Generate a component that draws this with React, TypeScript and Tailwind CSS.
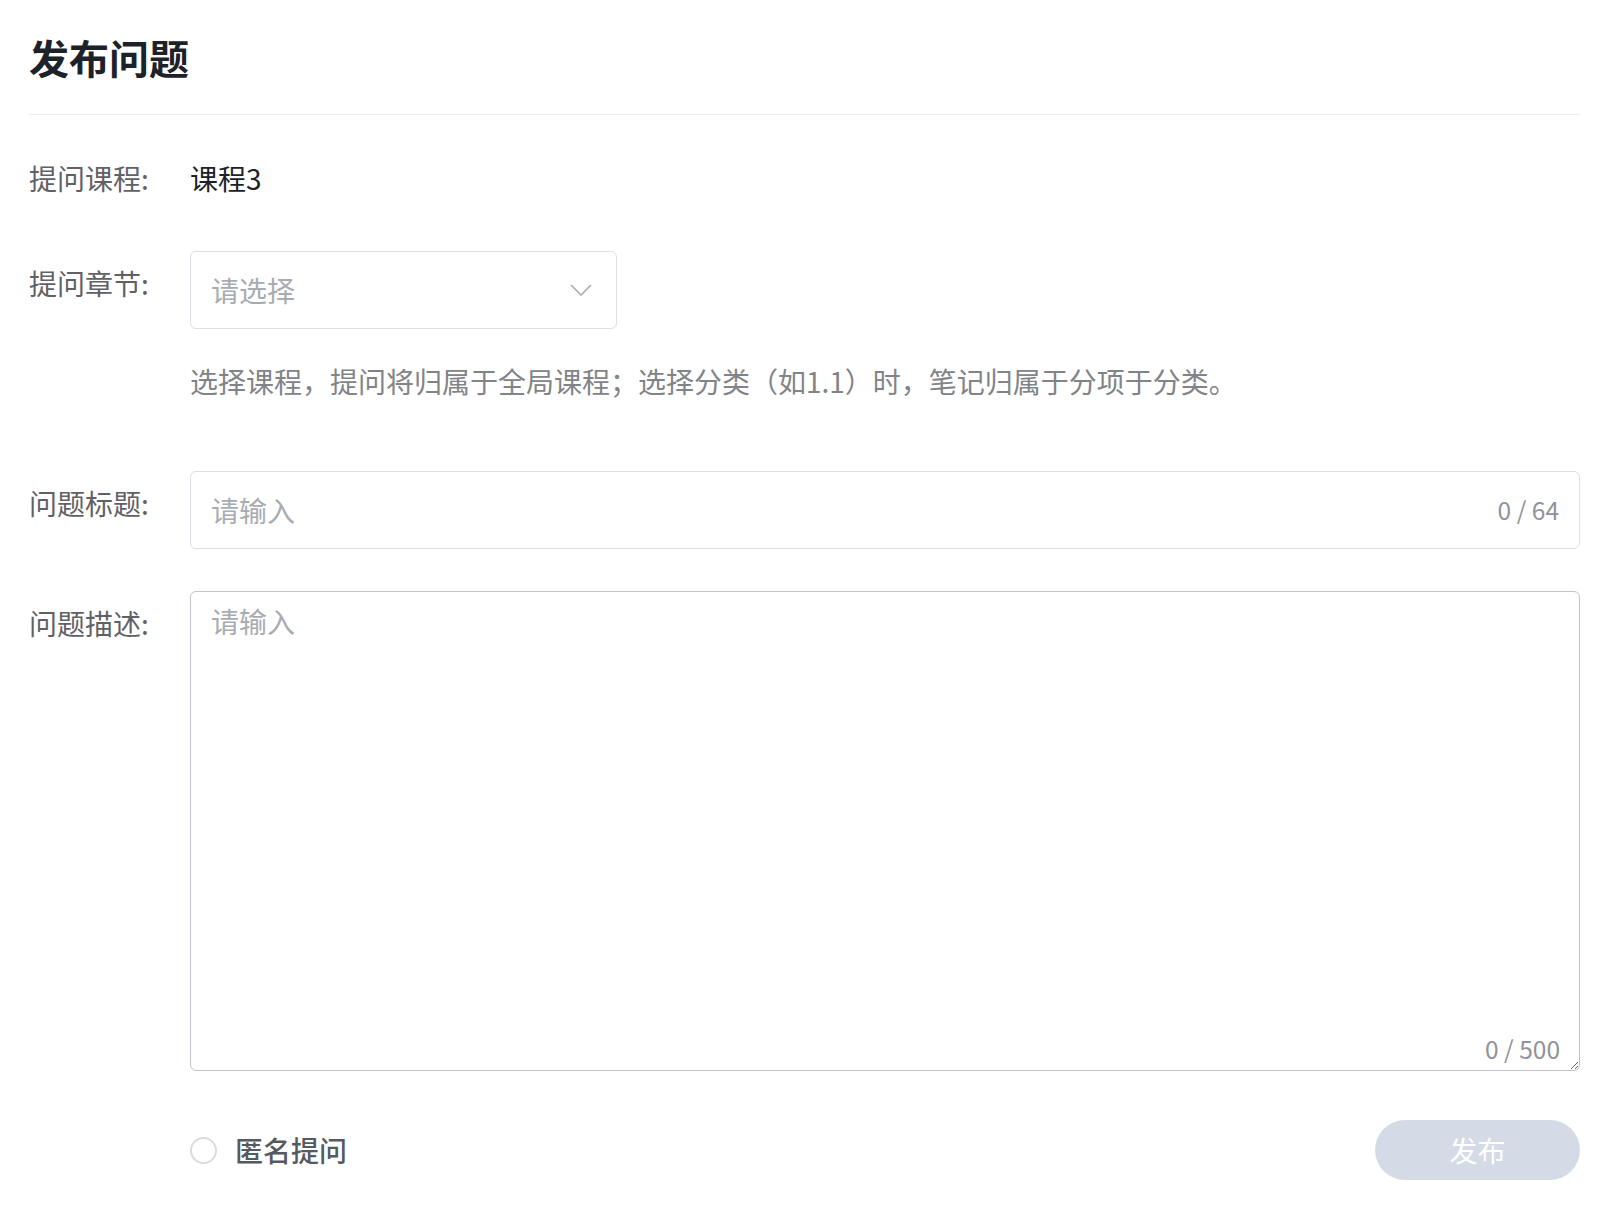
import { useState } from 'react'

const font = { fontFamily: '"Noto Sans CJK SC", "Noto Sans", sans-serif' }

function Label({ children }: { children: string }) {
  return (
    <div className="w-[161px] shrink-0 pt-[12px] text-[28px] leading-[41px] text-[#5f6166]">
      {children}
    </div>
  )
}

export default function App() {
  const [title, setTitle] = useState('')
  const [desc, setDesc] = useState('')
  const [anonymous, setAnonymous] = useState(false)

  return (
    <div className="min-h-[1222px] bg-white pl-[29px] pr-[42px] pt-[27px]" style={font}>
      <div className="border-b border-[#ebedf0] pb-[27px]">
        <h1 className="text-[40px] font-bold leading-[60px] text-[#1d2129]">发布问题</h1>
      </div>

      <div className="mt-[43px] flex text-[28px] leading-[41px]">
        <div className="w-[161px] shrink-0 text-[#5f6166]">提问课程:</div>
        <div className="text-[#1d2129]">课程3</div>
      </div>

      <div className="mt-[52px] flex">
        <Label>提问章节:</Label>
        <div className="flex flex-col">
          <button className="flex h-[78px] w-[427px] items-center justify-between rounded-[6px] border-[1.5px] border-[#dcdfe6] bg-white pl-[20px] pr-[24px] text-left">
            <span className="text-[28px] text-[#a8abb2]">请选择</span>
            <svg width="22" height="12" viewBox="0 0 22 12" fill="none">
              <path d="M1 1l10 10L21 1" stroke="#a8abb2" strokeWidth="1.6" />
            </svg>
          </button>
          <p className="mt-[32px] text-[28px] leading-[41px] text-[#818387]">
            选择课程，提问将归属于全局课程；选择分类（如1.1）时，笔记归属于分项于分类。
          </p>
        </div>
      </div>

      <div className="mt-[69px] flex">
        <Label>问题标题:</Label>
        <div className="flex h-[78px] flex-1 items-center rounded-[6px] border-[1.5px] border-[#dcdfe6] pl-[20px] pr-[20px]">
          <input
            value={title}
            maxLength={64}
            onChange={(e) => setTitle(e.target.value)}
            placeholder="请输入"
            className="flex-1 bg-transparent text-[28px] text-[#1d2129] outline-none placeholder:text-[#a8abb2]"
          />
          <span className="text-[24.5px] text-[#909399]">{title.length} / 64</span>
        </div>
      </div>

      <div className="mt-[42px] flex">
        <Label>问题描述:</Label>
        <div className="relative flex-1">
          <textarea
            value={desc}
            maxLength={500}
            onChange={(e) => setDesc(e.target.value)}
            placeholder="请输入"
            className="block h-[480px] w-full rounded-[6px] border-[1.5px] border-[#c0c4cc] px-[20px] py-[9px] text-[28px] leading-[41px] text-[#1d2129] outline-none placeholder:text-[#a8abb2]"
          />
          <span className="absolute bottom-[4px] right-[20px] text-[24.5px] leading-[36px] text-[#909399]">
            {desc.length} / 500
          </span>
        </div>
      </div>

      <div className="ml-[161px] mt-[49px] flex items-center justify-between">
        <label className="flex cursor-pointer items-center gap-[18px]" onClick={() => setAnonymous(!anonymous)}>
          <span
            className={
              anonymous
                ? 'h-[27px] w-[27px] rounded-full border-[7px] border-[#409eff]'
                : 'h-[27px] w-[27px] rounded-full border-2 border-[#d8dbe0]'
            }
          />
          <span className="text-[28px] font-medium text-[#555a61]">匿名提问</span>
        </label>
        <button className="h-[60px] w-[205px] rounded-full bg-[#d5dbe6] text-[28px] text-white">
          发布
        </button>
      </div>
    </div>
  )
}
